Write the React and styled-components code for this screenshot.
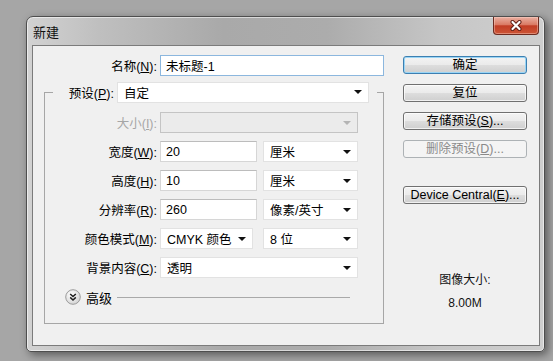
import React from 'react'
import styled, { createGlobalStyle, css } from 'styled-components'

const GlobalStyle = createGlobalStyle`
  html, body {
    margin: 0;
    height: 100%;
  }
  body {
    background: #a6a6a6;
    font-family: "Liberation Sans", "Noto Sans CJK SC", sans-serif;
    font-size: 12.5px;
    color: #000;
  }
  #root {
    padding: 16px 0 0 26px;
  }
`

function App() {
  return (
    <>
      <GlobalStyle />
      <Window>
        <TitleBar>
          <Title>新建</Title>
          <CloseButton aria-label="关闭">
            <svg width="14" height="11" viewBox="0 0 14 11">
              <path d="M3.5 2 L10.5 9 M10.5 2 L3.5 9" stroke="#5b1b12" strokeWidth="4" strokeLinecap="round" />
              <path d="M3.5 2 L10.5 9 M10.5 2 L3.5 9" stroke="#fff" strokeWidth="2.2" strokeLinecap="round" />
            </svg>
          </CloseButton>
        </TitleBar>

        <Client>
          <LeftCol>
            <NameRow>
              <Label>名称(<u>N</u>):</Label>
              <TextInput $focused defaultValue="未标题-1" $w={225} />
            </NameRow>

            <GroupBox>
              <Legend>
                <Label $w={61}>预设(<u>P</u>):</Label>
                <Select $w={252}>自定<Caret /></Select>
              </Legend>

              <Row>
                <Label $w={112} $disabled>大小(<u>I</u>):</Label>
                <Select $w={198} $disabled><span /><Caret $disabled /></Select>
              </Row>
              <Row>
                <Label $w={112}>宽度(<u>W</u>):</Label>
                <TextInput defaultValue="20" $w={97} />
                <Select $w={95} $second>厘米<Caret /></Select>
              </Row>
              <Row>
                <Label $w={112}>高度(<u>H</u>):</Label>
                <TextInput defaultValue="10" $w={97} />
                <Select $w={95} $second>厘米<Caret /></Select>
              </Row>
              <Row>
                <Label $w={112}>分辨率(<u>R</u>):</Label>
                <TextInput defaultValue="260" $w={97} />
                <Select $w={95} $second>像素/英寸<Caret /></Select>
              </Row>
              <Row>
                <Label $w={112}>颜色模式(<u>M</u>):</Label>
                <Select $w={93}>CMYK 颜色<Caret /></Select>
                <Select $w={95} $gap={10}>8 位<Caret /></Select>
              </Row>
              <Row>
                <Label $w={112}>背景内容(<u>C</u>):</Label>
                <Select $w={198}>透明<Caret /></Select>
              </Row>

              <AdvancedRow>
                <svg width="16" height="16" viewBox="0 0 16 16">
                  <defs>
                    <radialGradient id="adv" cx="40%" cy="35%" r="70%">
                      <stop offset="0%" stopColor="#ffffff" />
                      <stop offset="100%" stopColor="#d2d2d2" />
                    </radialGradient>
                  </defs>
                  <circle cx="8" cy="8" r="7.3" fill="url(#adv)" stroke="#9c9c9c" />
                  <path d="M5.2 5 L8 7.6 L10.8 5 M5.2 8.4 L8 11 L10.8 8.4" fill="none" stroke="#1e1e1e" strokeWidth="1.5" />
                </svg>
                <AdvancedText>高级</AdvancedText>
                <Rule />
              </AdvancedRow>
            </GroupBox>
          </LeftCol>

          <RightCol>
            <Button $default>确定</Button>
            <Button>复位</Button>
            <Button>存储预设(<u>S</u>)...</Button>
            <Button disabled>删除预设(<u>D</u>)...</Button>
            <Button $push>Device Central(<u>E</u>)...</Button>
            <SizeInfo>
              <span>图像大小:</span>
              <span>8.00M</span>
            </SizeInfo>
          </RightCol>
        </Client>
      </Window>
    </>
  )
}

export default App

const Window = styled.div`
  width: 519px;
  height: 336px;
  box-sizing: border-box;
  border: 1px solid #4e4e4e;
  border-radius: 7px 7px 5px 5px;
  padding: 0 4px 5px 5px;
  display: flex;
  flex-direction: column;
  background: linear-gradient(90deg, #d2d2d2 0%, #bfbfbf 14%, #a9a9a9 38%, #acacac 58%, #c6c6c6 80%, #cfcfcf 100%);
  box-shadow: 3px 3px 8px rgba(0, 0, 0, 0.45), inset 0 0 0 1px rgba(255, 255, 255, 0.55);
`

const TitleBar = styled.div`
  height: 28px;
  display: flex;
  align-items: center;
`

const Title = styled.span`
  padding-left: 1px;
  font-size: 13px;
  color: #111;
`

const CloseButton = styled.button`
  margin-left: auto;
  margin-right: 1px;
  align-self: flex-start;
  width: 46px;
  height: 18px;
  padding: 0;
  border: 1px solid #6e2b20;
  border-top: none;
  border-radius: 0 0 4px 4px;
  display: flex;
  align-items: center;
  justify-content: center;
  background: linear-gradient(#eab0a2 0%, #da7a64 45%, #c23d25 52%, #cc5536 100%);
  box-shadow: inset 0 0 0 1px rgba(255, 220, 210, 0.4);
`

const Client = styled.div`
  flex: 1;
  display: flex;
  padding: 9px 12px 0 11px;
  background: #f0f0f0;
  border: 1px solid #7b7b7b;
`

const LeftCol = styled.div`
  width: 340px;
  display: flex;
  flex-direction: column;
`

const NameRow = styled.div`
  height: 21px;
  display: flex;
  align-items: center;
  gap: 3px;
  & > label {
    width: 113px;
  }
`

const Label = styled.label`
  flex: none;
  width: ${p => (p.$w ? `${p.$w}px` : 'auto')};
  text-align: right;
  white-space: nowrap;
  color: ${p => (p.$disabled ? '#a6a6a6' : '#000')};
`

const TextInput = styled.input`
  width: ${p => p.$w}px;
  height: 21px;
  box-sizing: border-box;
  margin: 0;
  padding: 0 5px;
  border: 1px solid #d6d6d6;
  border-top-color: #bcbcbc;
  background: #fff;
  font: inherit;
  color: #000;
  outline: none;
  ${p => p.$focused && css`
    border-color: #8cb7de;
  `}
`

const GroupBox = styled.fieldset`
  margin: 6px 0 0 0;
  padding: 10px 0 18px 0;
  min-width: 0;
  border: 1px solid #a6a6a6;
`

const Legend = styled.legend`
  margin-left: 8px;
  padding: 0 8px 0 0;
  height: 20px;
  display: flex;
  align-items: center;
  gap: 3px;
`

const Row = styled.div`
  height: 21px;
  margin-bottom: 8px;
  display: flex;
  align-items: center;
  & > label {
    margin-right: 3px;
  }
`

const Select = styled.div`
  width: ${p => p.$w}px;
  height: 21px;
  box-sizing: border-box;
  margin-left: ${p => (p.$gap ? `${p.$gap}px` : p.$second ? '6px' : '0')};
  padding: 0 6px 0 6px;
  display: flex;
  align-items: center;
  justify-content: space-between;
  white-space: nowrap;
  background: ${p => (p.$disabled ? '#ebebeb' : '#fff')};
  border: 1px solid ${p => (p.$disabled ? '#c4c4c4' : '#e2e2e2')};
`

const Caret = styled.span`
  width: 0;
  height: 0;
  border-left: 4px solid transparent;
  border-right: 4px solid transparent;
  border-top: 4px solid ${p => (p.$disabled ? '#b4b4b4' : '#111')};
`

const AdvancedRow = styled.div`
  margin-top: 11px;
  padding-left: 20px;
  height: 16px;
  display: flex;
  align-items: center;
`

const AdvancedText = styled.span`
  margin-left: 5px;
  font-size: 13px;
`

const Rule = styled.div`
  margin-left: 5px;
  width: 233px;
  height: 1px;
  background: #a9a9a9;
`

const RightCol = styled.div`
  margin-left: auto;
  width: 124px;
  padding-top: 1px;
  display: flex;
  flex-direction: column;
  gap: 10px;
`

const Button = styled.button`
  height: 18px;
  margin: 0;
  margin-top: ${p => (p.$push ? '18px' : '0')};
  padding: 0;
  font: inherit;
  color: #000;
  line-height: 16px;
  border: 1px solid #707070;
  border-radius: 3px;
  background: linear-gradient(#f3f3f3 0%, #ebebeb 48%, #dddddd 52%, #cfcfcf 100%);
  box-shadow: inset 0 0 0 1px rgba(255, 255, 255, 0.7);
  ${p => p.$default && css`
    border-color: #3c7fb1;
    box-shadow: inset 0 0 0 1px #9ad5f5;
  `}
  &:disabled {
    color: #8a8a8a;
    border-color: #adb2b5;
    background: #f4f4f4;
    box-shadow: none;
  }
`

const SizeInfo = styled.div`
  margin-top: 58px;
  display: flex;
  flex-direction: column;
  align-items: center;
  gap: 7px;
  line-height: 16px;
  font-size: 12px;
  color: #111;
`
